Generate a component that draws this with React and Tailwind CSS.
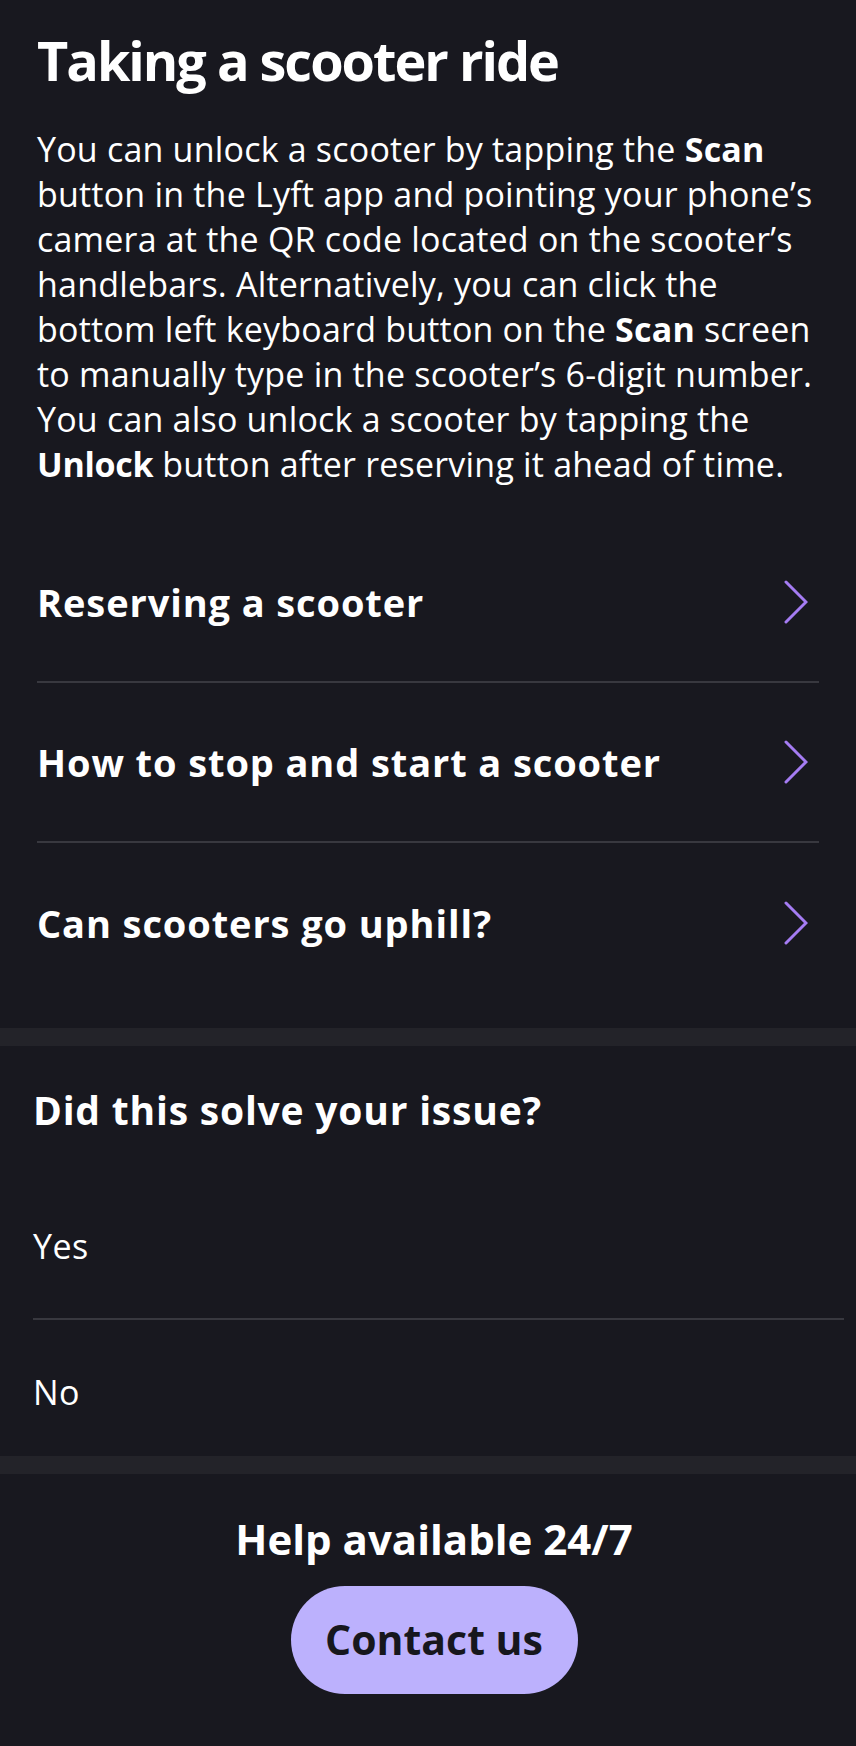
import React from "react";

const topics = [
  "Reserving a scooter",
  "How to stop and start a scooter",
  "Can scooters go uphill?",
];

const Chevron = () => (
  <svg width="24" height="44" viewBox="0 0 24 44" fill="none" className="shrink-0">
    <polyline
      points="2,2 22,22 2,42"
      stroke="#a57cf3"
      strokeWidth="3"
      strokeLinecap="round"
      strokeLinejoin="miter"
    />
  </svg>
);

export default function App() {
  return (
    <div
      className="w-[856px] min-h-[1746px] bg-[#18181f] text-white"
      style={{ fontFamily: "'Open Sans', 'Noto Sans', sans-serif" }}
    >
      {/* article */}
      <div className="px-[37px] pt-[30px]">
        <h1 className="text-[54px] leading-[60px] font-bold tracking-[-2px]">
          Taking a scooter ride
        </h1>
        <p className="mt-[37px] text-[34px] leading-[45px] tracking-[0.2px]">
          You can unlock a scooter by tapping the <b>Scan</b> button in the Lyft
          app and pointing your phone’s camera at the QR code located on the
          scooter’s handlebars. Alternatively, you can click the bottom left
          keyboard button on the <b>Scan</b> screen to manually type in the
          scooter’s 6-digit number. You can also unlock a scooter by tapping the{" "}
          <b className="tracking-[-0.3px]">Unlock</b> button after reserving it ahead of time.
        </p>
      </div>

      {/* related topics */}
      <div className="mx-[37px] mt-[36px] pb-[25px]">
        {topics.map((t, i) => (
          <div
            key={t}
            className={`flex items-center justify-between h-[160px] ${
              i < topics.length - 1 ? "border-b-2 border-[#38383f]" : ""
            }`}
          >
            <span className="text-[38px] leading-[44px] font-bold tracking-[0.9px]">{t}</span>
            <div className="mr-[11px]">
              <Chevron />
            </div>
          </div>
        ))}
      </div>

      <div className="h-[18px] bg-[#232329]" />

      {/* feedback */}
      <div className="ml-[33px] mr-[12px]">
        <div className="h-[128px] flex items-center">
          <h2 className="text-[39px] leading-[44px] font-bold tracking-[0.8px]">
            Did this solve your issue?
          </h2>
        </div>
        <div className="h-[146px] flex items-center border-b-2 border-[#38383f]">
          <span className="text-[34px] leading-[40px] tracking-[0.5px]">Yes</span>
        </div>
        <div className="h-[136px] pt-[8px] flex items-center">
          <span className="text-[34px] leading-[40px] tracking-[0.5px]">No</span>
        </div>
      </div>

      <div className="h-[18px] bg-[#232329]" />

      {/* contact */}
      <div className="flex flex-col items-center pl-[12px] pt-[43px] pb-[51px]">
        <p className="text-[42px] leading-[44px] font-bold">Help available 24/7</p>
        <button className="mt-[25px] w-[287px] h-[108px] rounded-full bg-[#bcb1fd] text-[#17171d] text-[41px] font-bold">
          Contact us
        </button>
      </div>
    </div>
  );
}
